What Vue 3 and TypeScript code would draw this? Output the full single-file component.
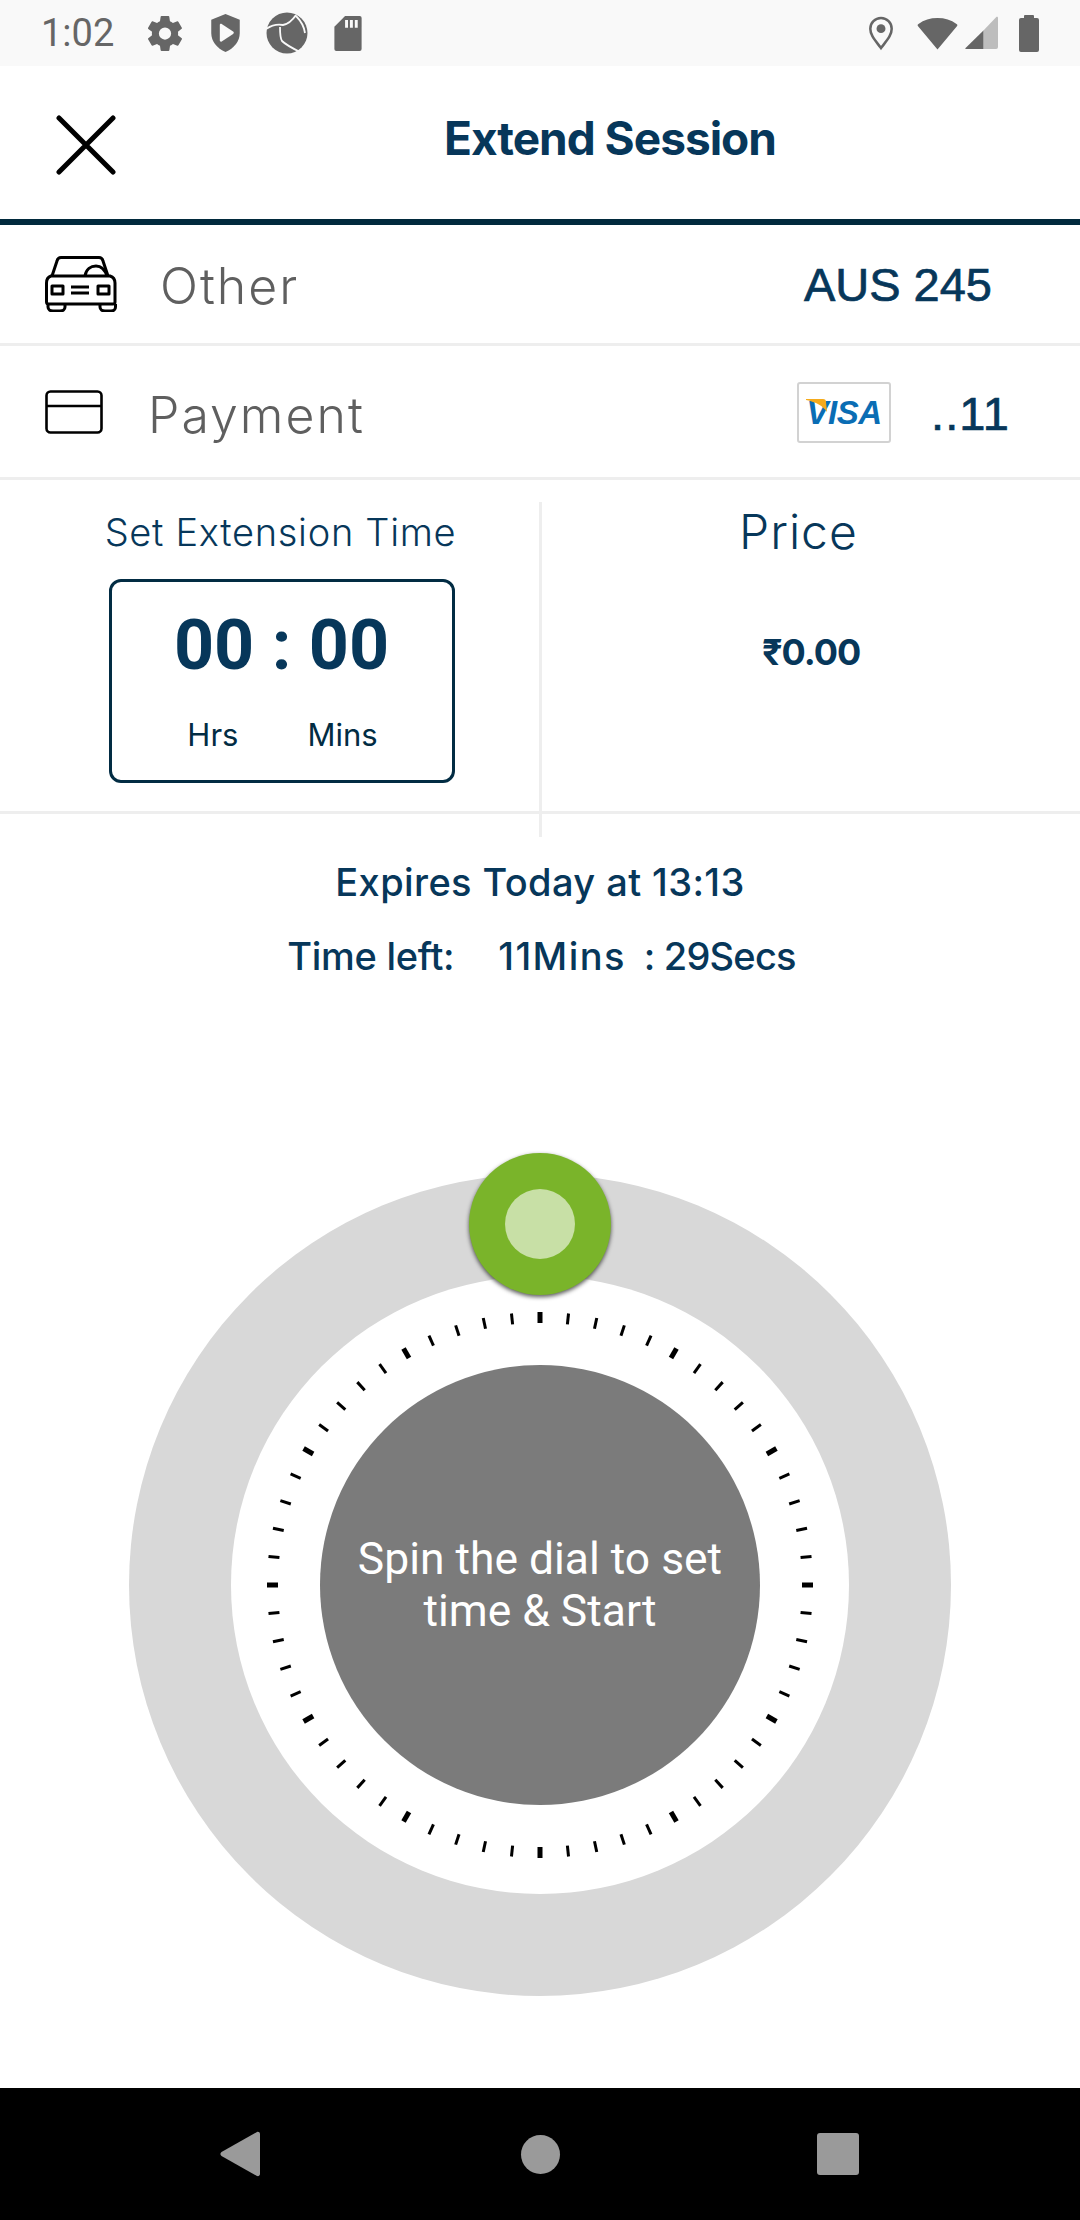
<script setup lang="ts">
// one tick every 6deg, every 5th one is thicker
const ticks = Array.from({ length: 60 }, (_, i) => ({
  angle: i * 6,
  major: i % 5 === 0,
}))
</script>

<template>
  <div class="screen">
    <!-- status bar -->
    <div class="status-bar">
      <span class="status-time">1:02</span>
      <div class="status-icons">
        <svg width="34" height="35" viewBox="2.300 2 19.400 20" fill="#666">
          <path d="M19.400 13c.04-.32.1-.65.1-1s-.06-.68-.1-1l2.100-1.650a.5.5 0 0 0 .12-.64l-2-3.460a.5.5 0 0 0-.61-.22l-2.490 1a7.300 7.300 0 0 0-1.690-.98l-.38-2.650A.49.49 0 0 0 14 2h-4a.49.49 0 0 0-.49.42l-.38 2.650c-.61.25-1.170.59-1.690.98l-2.490-1a.5.5 0 0 0-.61.22l-2 3.460a.5.5 0 0 0 .12.64L4.600 11c-.04.32-.1.66-.1 1s.06.68.1 1l-2.140 1.650a.5.5 0 0 0-.12.64l2 3.460c.12.22.39.3.61.22l2.490-1c.52.4 1.080.73 1.690.98l.38 2.650c.05.24.26.4.49.4h4c.23 0 .44-.16.49-.4l.38-2.650c.61-.25 1.170-.59 1.690-.98l2.490 1c.22.08.49 0 .61-.22l2-3.460a.5.5 0 0 0-.12-.64L19.400 13zM12 15.500a3.500 3.500 0 1 1 0-7 3.500 3.500 0 0 1 0 7z" />
        </svg>
        <svg class="icon-shield" width="31" height="38" viewBox="0 0 32 40">
          <path fill="#666" d="M16 0 31 6v14c0 9-6 16-15 20C7 36 1 29 1 20V6z" />
          <path fill="#f9f9f9" d="M10 11.500c0-1 1-1.500 2-1l12 8c1 .7 1 1.800 0 2.500l-12 8c-1 .5-2 0-2-1z" />
        </svg>
        <svg class="icon-aperture" width="42" height="42" viewBox="0 0 42 42">
          <circle cx="21" cy="21" r="20.500" fill="#666" />
          <path fill="none" stroke="#f9f9f9" stroke-width="1.800" d="M0 17C6 13 12 12 17 13 22 12 26 9 30 3M14 15C14 21 14 26 16 29 20 33 26 36 34 40M30 4C35 9 38 14 39 21" />
        </svg>
        <svg class="icon-sd" width="28" height="35" viewBox="0 0 28 36">
          <path fill="#666" d="M11 0h15a2 2 0 0 1 2 2v32a2 2 0 0 1-2 2H2a2 2 0 0 1-2-2V11z" />
          <path fill="#f9f9f9" d="M11 4h3v8h-3zM16 4h3v8h-3zM21 4h3v8h-3z" />
        </svg>
      </div>
      <div class="status-right">
        <svg width="26" height="35" viewBox="0 0 26 36">
          <path fill="#f9f9f9" stroke="#666" stroke-width="2.600" d="M13 33C7 25 2 20 2 13a11 11 0 0 1 22 0c0 7-5 12-11 20z" />
          <circle cx="13" cy="13" r="4.600" fill="#666" />
        </svg>
        <svg class="wifi" width="43" height="33" viewBox="0 0 42 34">
          <path fill="#666" d="M21 33.500 1 9.500c-.8-1-.6-1.600.4-2.300C7 3 13.500 1 21 1s14 2 19.600 6.200c1 .7 1.200 1.300.4 2.300z" />
        </svg>
        <svg class="signal" width="33" height="34" viewBox="0 0 34 35">
          <path fill="#bdbdbd" d="M19 34h13a2 2 0 0 0 2-2V2c0-1-1-1.500-2-.8L19 15z" />
          <path fill="#666" d="M19 15 .6 33c-.5.500-.2 1 .4 1h18z" />
        </svg>
        <svg class="battery" width="20" height="37" viewBox="0 0 20 37">
          <path fill="#666" d="M5 3V1a1 1 0 0 1 1-1h8a1 1 0 0 1 1 1v2h3a2 2 0 0 1 2 2v30a2 2 0 0 1-2 2H2a2 2 0 0 1-2-2V5a2 2 0 0 1 2-2z" />
        </svg>
      </div>
    </div>

    <!-- header -->
    <header class="header">
      <svg class="close" width="60" height="60" viewBox="0 0 60 60">
        <path d="M3 3l54 54M57 3 3 57" fill="none" stroke="#000" stroke-width="5" stroke-linecap="round" />
      </svg>
      <h1 class="title">Extend Session</h1>
    </header>

    <!-- vehicle row -->
    <div class="row row-vehicle">
      <svg class="car" width="72" height="56" viewBox="0 0 72 56" fill="none" stroke="#000" stroke-width="3" stroke-linejoin="round">
        <path d="M7 20 12 5c.5-2 2-3.500 4-3.500h38c2 0 3.500 1.500 4 3.500l5 15" />
        <path d="M6 20h59c3 1 5 4 5 7v19c0 1.500-1 2-2 2H4c-1 0-2.500-.5-2.500-2V27c0-3 1.500-6 4.500-7z" />
        <path d="M40 20c1-7 6-10 11-10s9 4 11 10" />
        <path d="M3 48v3c0 2 2 4 5 4h7c3 0 5-2 5-4v-3M55 48v3c0 2 2 4 5 4h6c3 0 4.500-2 4.500-4v-3" />
        <rect x="7" y="30" width="11" height="8" />
        <rect x="53" y="30" width="11" height="8" />
        <path d="M26 31h18M26 37h18" />
      </svg>
      <span class="row-label label-other">Other</span>
      <span class="row-value value-plate">AUS 245</span>
    </div>

    <!-- payment row -->
    <div class="row row-payment">
      <svg class="card-icon" width="58" height="44" viewBox="0 0 58 44" fill="none" stroke="#000" stroke-width="2.600">
        <rect x="1.500" y="1.500" width="55" height="41" rx="4" />
        <path d="M1.500 16h55" />
      </svg>
      <span class="row-label label-payment">Payment</span>
      <div class="visa">
        <svg class="visa-tick" width="22" height="14" viewBox="0 0 22 14">
          <path fill="#f5ab1c" d="M0 0h17c2 0 3 1 3 3l1 10C17 7 10 3 0 1z" />
        </svg>
        <span class="visa-text">VISA</span>
      </div>
      <span class="row-value value-card">..11</span>
    </div>

    <!-- time and price -->
    <div class="time-grid">
      <div class="time-cell">
        <div class="time-label">Set Extension Time</div>
        <div class="time-box">
          <div class="time-digits">00 : 00</div>
          <div class="time-units">
            <span>Hrs</span>
            <span>Mins</span>
          </div>
        </div>
      </div>
      <div class="grid-vline"></div>
      <div class="price-cell">
        <div class="price-label">Price</div>
        <div class="price-value">₹0.00</div>
      </div>
      <div class="grid-hline"></div>
    </div>

    <!-- expiry -->
    <div class="expiry">
      <div class="expiry-date">Expires Today at 13:13</div>
      <div class="expiry-left">
        <span>Time left:</span>
        <span class="left-mins">11Mins</span>
        <span class="left-secs">: 29Secs</span>
      </div>
    </div>

    <!-- dial -->
    <div class="dial-wrap">
      <div class="dial">
        <div class="dial-inner">
          <div class="dial-center">Spin the dial to set<br />time &amp; Start</div>
        </div>
        <svg class="dial-ticks" width="822" height="822" viewBox="-411 -411 822 822">
          <rect
            v-for="t in ticks"
            :key="t.angle"
            :x="t.major ? -2.500 : -1.500"
            y="-273"
            :width="t.major ? 5 : 3"
            height="11"
            fill="#000"
            :transform="`rotate(${t.angle})`"
          />
        </svg>
        <div class="knob"><div class="knob-dot"></div></div>
      </div>
    </div>

    <!-- nav bar -->
    <nav class="nav-bar">
      <svg width="40" height="46" viewBox="0 0 40 46">
        <path fill="#9a9a9a" d="M37 1 1.500 21c-1.500 1-1.500 3 0 4L37 45c1.500.5 3-.5 3-2V3c0-1.500-1.500-2.500-3-2z" />
      </svg>
      <div class="nav-home"></div>
      <div class="nav-recent"></div>
    </nav>
  </div>
</template>

<style scoped>
.screen {
  display: flex;
  flex-direction: column;
  width: 1080px;
  height: 2220px;
  background: #fff;
  overflow: hidden;
  font-family: Inter, "Noto Sans", sans-serif;
  color: #07375a;
}

.status-bar {
  display: flex;
  align-items: center;
  height: 66px;
  padding: 0 41px;
  background: #f9f9f9;
}

.status-time {
  width: 107px;
  font-family: Roboto, sans-serif;
  font-size: 38px;
  color: #666;
}

.status-icons {
  display: flex;
  align-items: center;
}

.icon-shield {
  margin-left: 28px;
}

.icon-aperture {
  margin-left: 25px;
}

.icon-sd {
  margin-left: 26px;
}

.status-right {
  display: flex;
  align-items: center;
  margin-left: auto;
}

.wifi {
  margin-left: 22px;
}

.signal {
  margin-left: 6px;
}

.battery {
  margin-left: 21px;
}

.header {
  display: flex;
  align-items: center;
  height: 153px;
  padding-left: 56px;
  border-bottom: 6px solid #012a3d;
}

.close {
  flex: none;
  margin-top: 4px;
}

.title {
  margin: 0 0 9px 328px;
  font-size: 46px;
  font-weight: 700;
  letter-spacing: -1px;
}

.row {
  display: flex;
  align-items: center;
  padding-left: 45px;
  border-bottom: 3px solid #eee;
}

.row-vehicle {
  height: 118px;
}

.row-payment {
  height: 131px;
}

.row-label {
  font-size: 50px;
  font-weight: 300;
  letter-spacing: 2px;
  color: #5f5f5f;
}

.label-other {
  margin-top: 4px;
  margin-left: 43px;
}

.label-payment {
  margin-top: 6px;
  margin-left: 45px;
}

.row-value {
  font-family: "Liberation Sans", Arial, sans-serif;
  font-size: 47px;
  -webkit-text-stroke: 0.700px #07375a;
}

.value-plate {
  margin-left: auto;
  margin-right: 88px;
}

.value-card {
  margin-top: 4px;
  margin-left: 40px;
  margin-right: 70px;
  letter-spacing: 1px;
}

.visa {
  position: relative;
  display: flex;
  align-items: center;
  justify-content: center;
  box-sizing: border-box;
  width: 94px;
  height: 61px;
  margin-top: 2px;
  margin-left: auto;
  border: 2px solid #d2d2d2;
  border-radius: 3px;
}

.visa-tick {
  position: absolute;
  top: 15px;
  left: 7px;
}

.visa-text {
  font-family: "Liberation Sans", Arial, sans-serif;
  font-size: 33px;
  font-style: italic;
  font-weight: 700;
  letter-spacing: -0.500px;
  color: #0a6db4;
}

.time-grid {
  display: grid;
  grid-template-columns: 539px 3px 1fr;
  grid-template-rows: 331px 3px 23px;
}

.time-cell {
  grid-column: 1;
  grid-row: 1;
  display: flex;
  flex-direction: column;
  align-items: center;
  padding: 29px 0 0 24px;
}

.time-label {
  margin-right: 2px;
  font-size: 38px;
  font-weight: 300;
  letter-spacing: 0.700px;
  line-height: 46px;
  white-space: nowrap;
}

.time-box {
  box-sizing: border-box;
  width: 346px;
  height: 204px;
  margin-top: 24px;
  border: 3px solid #022c43;
  border-radius: 12px;
}

.time-digits {
  margin-top: 23px;
  font-family: Roboto, sans-serif;
  font-size: 70px;
  font-weight: 700;
  line-height: 80px;
  text-align: center;
}

.time-units {
  display: flex;
  justify-content: center;
  gap: 69px;
  margin-top: 31px;
  padding-left: 2px;
  font-size: 31px;
  color: #022c43;
}

.grid-vline {
  grid-column: 2;
  grid-row: 1 / 4;
  margin-top: 22px;
  background: #eee;
}

.price-cell {
  grid-column: 3;
  grid-row: 1;
  display: flex;
  flex-direction: column;
  align-items: flex-start;
  padding: 24px 0 0 197px;
}

.price-label {
  font-size: 48px;
  font-weight: 300;
  letter-spacing: 1px;
  line-height: 56px;
}

.price-value {
  margin-top: 70px;
  margin-left: 23px;
  font-size: 36px;
  font-weight: 700;
  letter-spacing: -1px;
}

.grid-hline {
  grid-column: 1 / 4;
  grid-row: 2;
  background: #eee;
}

.expiry {
  display: flex;
  flex-direction: column;
  align-items: center;
  gap: 28px;
  margin-top: 22px;
  font-size: 38px;
  font-weight: 500;
  line-height: 46px;
}

.expiry-date {
  letter-spacing: 0.400px;
}

.expiry-left {
  display: flex;
  margin-left: 3px;
  letter-spacing: -0.300px;
}

.left-mins {
  margin-left: 44px;
  letter-spacing: 1.400px;
}

.left-secs {
  margin-left: 18px;
  letter-spacing: -0.800px;
}

.dial-wrap {
  display: flex;
  justify-content: center;
  margin-top: 195px;
}

.dial {
  position: relative;
  display: flex;
  align-items: center;
  justify-content: center;
  width: 822px;
  height: 822px;
  border-radius: 50%;
  background: #d8d8d8;
}

.dial-inner {
  display: flex;
  align-items: center;
  justify-content: center;
  width: 618px;
  height: 618px;
  border-radius: 50%;
  background: #fff;
}

.dial-center {
  display: flex;
  align-items: center;
  justify-content: center;
  width: 440px;
  height: 440px;
  border-radius: 50%;
  background: #7b7b7b;
  font-family: Roboto, sans-serif;
  font-size: 44.400px;
  line-height: 52px;
  text-align: center;
  color: #fff;
}

.dial-ticks {
  position: absolute;
  inset: 0;
}

.knob {
  position: absolute;
  top: -21px;
  left: 340px;
  display: flex;
  align-items: center;
  justify-content: center;
  width: 142px;
  height: 142px;
  border-radius: 50%;
  background: #7ab42a;
  box-shadow: 0 2px 4px rgba(0, 0, 0, 0.65);
}

.knob-dot {
  width: 70px;
  height: 70px;
  border-radius: 50%;
  background: #c8e0a6;
}

.nav-bar {
  display: flex;
  align-items: center;
  justify-content: space-between;
  height: 132px;
  margin-top: auto;
  padding: 0 221px 0 220px;
  background: #000;
}

.nav-home {
  width: 39px;
  height: 39px;
  margin-left: 3px;
  border-radius: 50%;
  background: #9a9a9a;
}

.nav-recent {
  width: 42px;
  height: 42px;
  border-radius: 3px;
  background: #9a9a9a;
}
</style>

<style>
html,
body {
  margin: 0;
  background: #fff;
}
</style>
